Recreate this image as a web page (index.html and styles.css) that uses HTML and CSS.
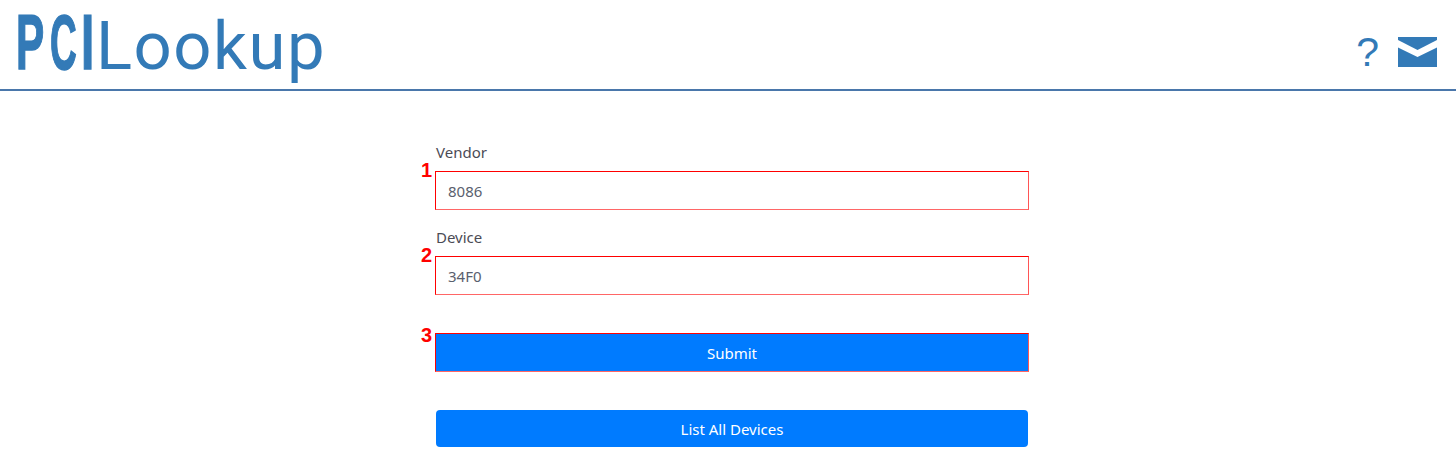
FILE: index.html
```html
<!DOCTYPE html>
<html lang="en">

<head>
  <meta charset="UTF-8">
  <meta name="viewport" content="width=device-width, initial-scale=1.0">
  <title>PCI Lookup</title>
  <link rel="stylesheet" href="styles.css">
</head>

<body>
  <header class="site-header">
    <a href="#" class="logo"><span class="logo-pci"><span class="logo-p">P</span><span class="logo-c">C</span><span class="logo-i">I</span></span><span class="logo-word">Lookup</span></a>
    <div class="header-icons">
      <a href="#" class="help-link">?</a>
      <a href="#" class="mail-link" aria-label="Contact">
        <svg width="39" height="30" viewBox="0 0 39 30" aria-hidden="true">
          <path d="M0 0H39V3L19.5 13 0 3Z" />
          <path d="M0 10.5L19.5 20 39 10.5V30H0Z" />
        </svg>
      </a>
    </div>
  </header>

  <main class="lookup">
    <form class="lookup-form">
      <div class="field">
        <label for="vendor">Vendor</label>
        <div class="marked">
          <span class="step">1</span>
          <input id="vendor" type="text" value="8086">
        </div>
      </div>
      <div class="field">
        <label for="device">Device</label>
        <div class="marked">
          <span class="step">2</span>
          <input id="device" type="text" value="34F0">
        </div>
      </div>
      <div class="marked submit-row">
        <span class="step">3</span>
        <button type="submit" class="btn btn-square">Submit</button>
      </div>
      <button type="button" class="btn">List All Devices</button>
    </form>
  </main>
</body>

</html>
```

FILE: styles.css
```css
:root {
  --brand: #337ab7;
  --primary: #007bff;
  --mark: #ff0000;
}

body {
  margin: 0;
  font-family: "Noto Sans", "Open Sans", sans-serif;
  font-size: 15px;
  color: #495057;
  background: #fff;
}

a {
  color: var(--brand);
  text-decoration: none;
}

.site-header {
  display: flex;
  justify-content: space-between;
  align-items: center;
  height: 89px;
  padding: 0 19px 0 16px;
  border-bottom: 2px solid #4a77ab;
}

.logo {
  display: flex;
  align-items: baseline;
  height: 89px;
  line-height: 84px;
}

.logo-pci {
  display: flex;
  width: 80px;
  font-family: "Liberation Sans", sans-serif;
  font-size: 77px;
  font-weight: bold;
  -webkit-text-stroke: 1.5px var(--brand);
}

.logo-p,
.logo-c,
.logo-i {
  display: block;
  transform-origin: left;
}

.logo-p {
  width: 34px;
  transform: scaleX(0.55);
}

.logo-c {
  width: 31px;
  transform: scaleX(0.48);
}

.logo-i {
  width: 15px;
  transform: scaleX(0.62);
}

.logo-word {
  font-family: Roboto, sans-serif;
  font-size: 67px;
  letter-spacing: 1.5px;
}

.header-icons {
  display: flex;
  align-items: center;
  gap: 19px;
  padding-top: 14px;
}

.help-link {
  font-family: "Liberation Sans", sans-serif;
  font-size: 41px;
  line-height: 46px;
}

.mail-link {
  display: flex;
}

.mail-link svg {
  fill: var(--brand);
}

.lookup {
  display: flex;
  justify-content: center;
  padding: 50px 0 0 8px;
}

.lookup-form {
  width: 592px;
}

.field {
  margin-bottom: 16px;
}

.field label {
  display: block;
  margin-bottom: 8px;
  line-height: 22px;
  color: #4b4b55;
}

.marked {
  position: relative;
  margin: 0 -1px;
  border: 1px solid var(--mark);
  border-right-color: #f55;
  border-bottom-color: #f66;
}

.step {
  position: absolute;
  left: -15px;
  top: -12px;
  font-family: "Liberation Sans", sans-serif;
  font-size: 20px;
  font-weight: bold;
  line-height: 20px;
  color: var(--mark);
}

.submit-row .step {
  top: -9px;
}

.field input {
  display: block;
  box-sizing: border-box;
  width: 100%;
  height: 37px;
  padding: 0 12px;
  border: none;
  outline: none;
  font: inherit;
  color: #5a5f6e;
}

.submit-row {
  margin-top: 38px;
  margin-bottom: 38px;
}

.btn {
  display: block;
  width: 592px;
  height: 37px;
  padding: 0;
  border: none;
  border-radius: 4px;
  background: var(--primary);
  font: inherit;
  color: #fff;
  cursor: pointer;
}

.btn-square {
  border-radius: 0;
}
```
